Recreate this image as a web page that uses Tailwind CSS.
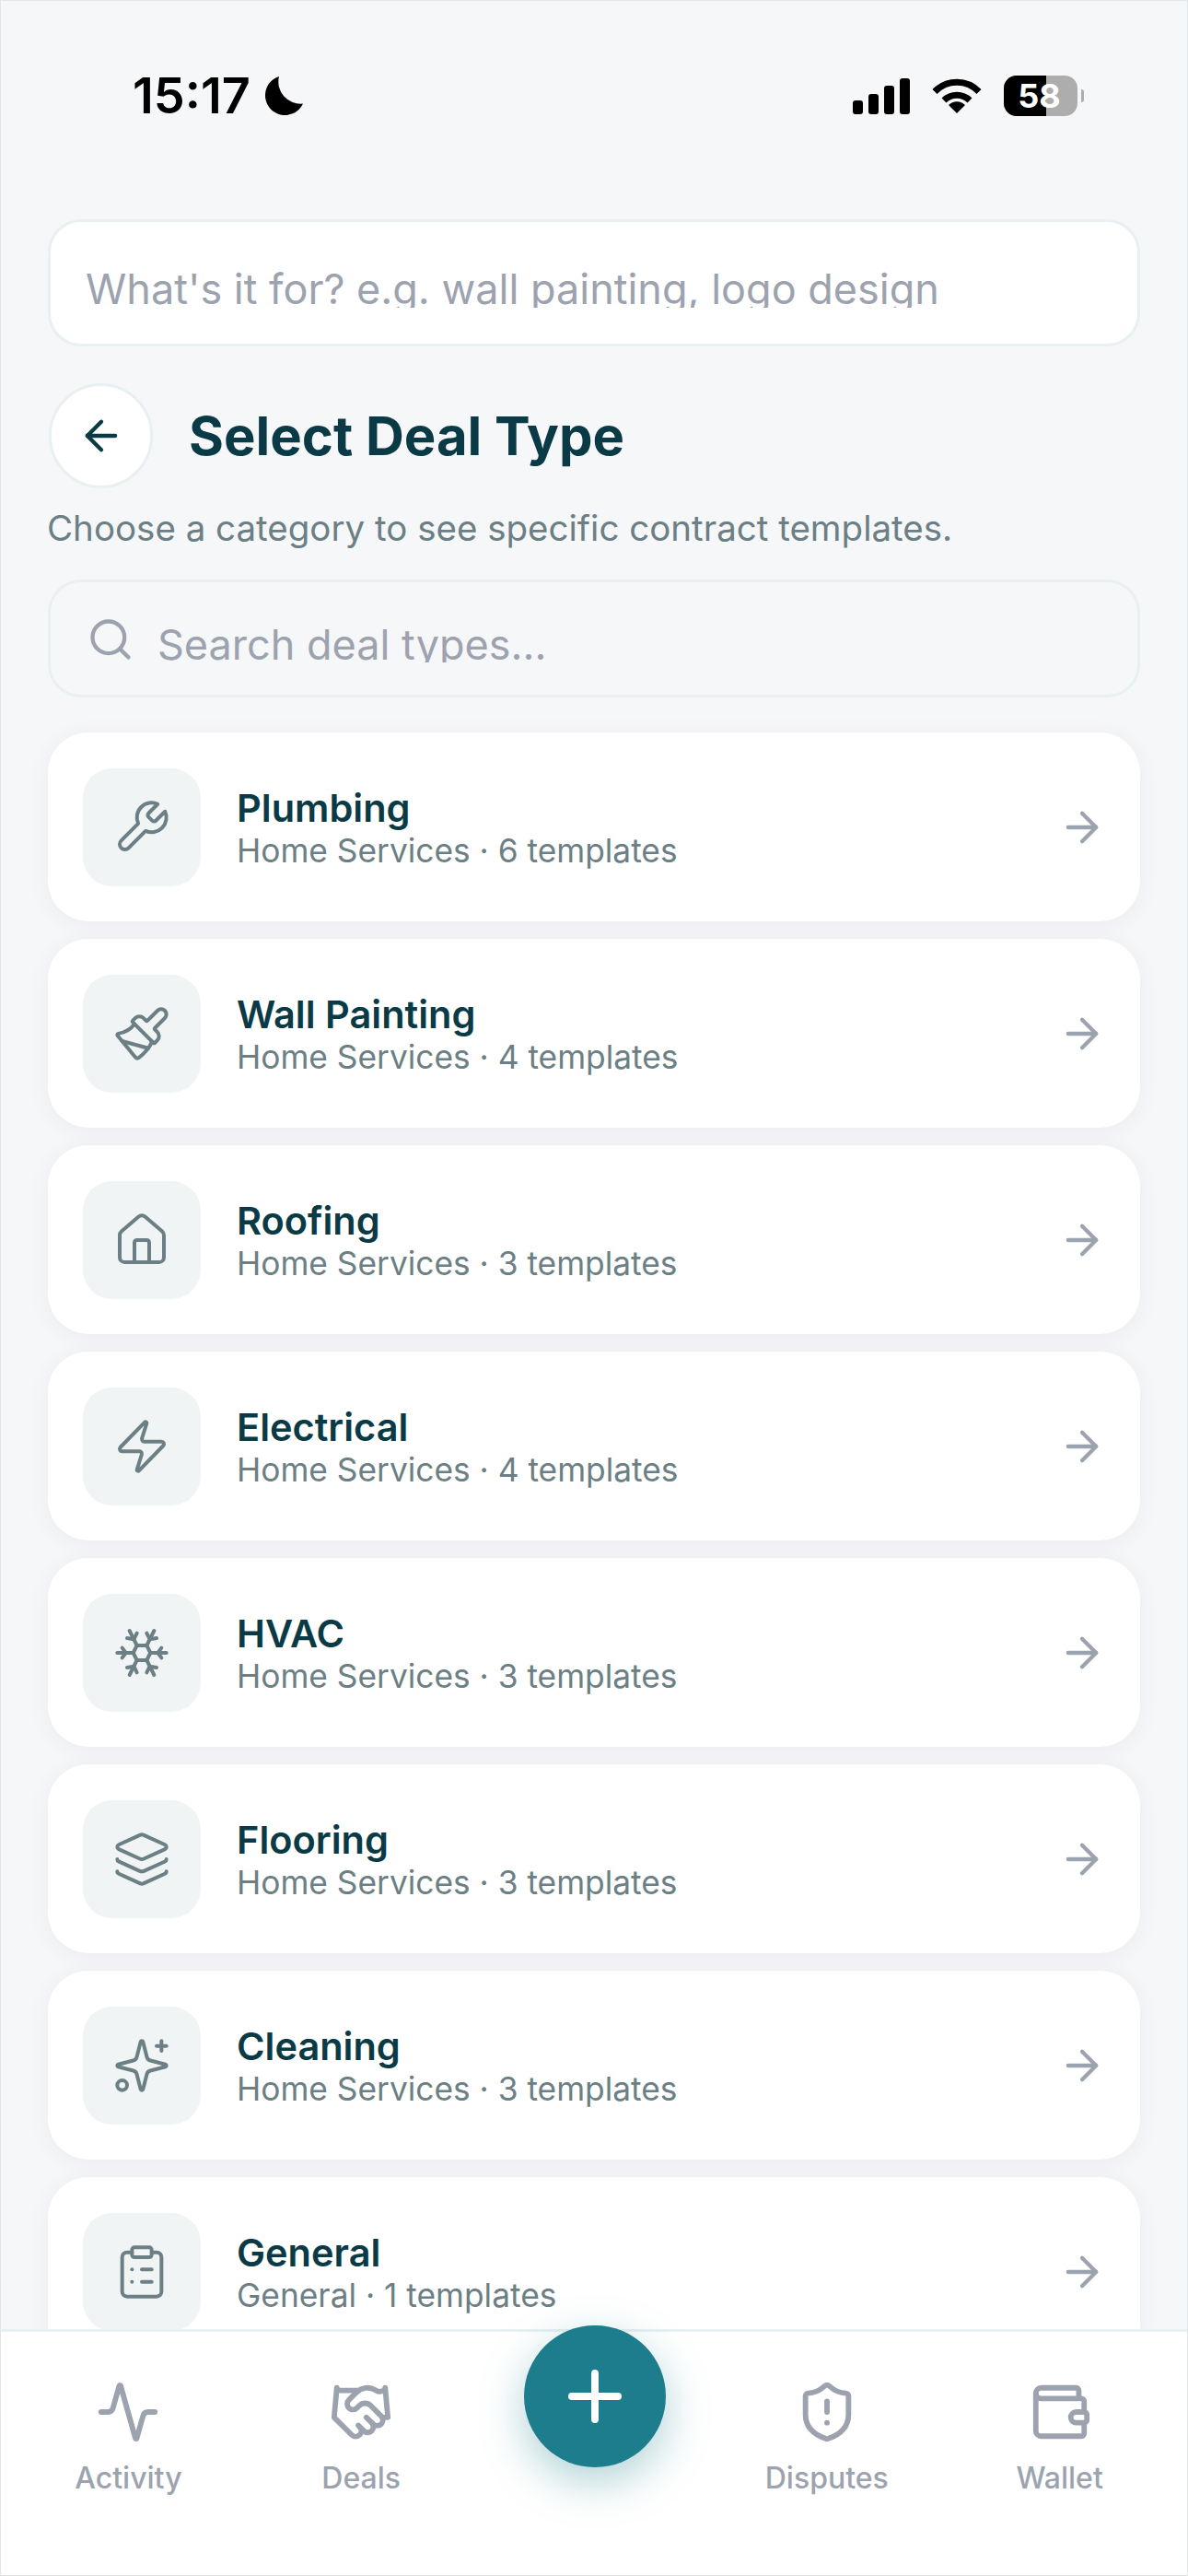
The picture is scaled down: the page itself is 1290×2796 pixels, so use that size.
<!DOCTYPE html>
<html lang="en">
<head>
    <meta charset="UTF-8">
    <meta name="viewport" content="width=device-width, initial-scale=1.0">
    <title>Select Deal Type</title>
    <script src="https://cdn.jsdelivr.net/npm/@tailwindcss/browser@4"></script>
</head>
<body class="bg-[#f6f7f9]">
<div class="w-[1290px] h-[2796px] flex flex-col overflow-hidden border border-[#e2e5ea] font-['Inter',sans-serif]">
    <!-- Status bar -->
    <div class="h-[237px] shrink-0 flex justify-between items-start pt-[81px] pl-[143px] pr-[112px] text-black">
        <div class="flex items-center gap-[14px] h-[44px]">
            <span class="text-[54px] leading-[44px] font-semibold">15:17</span>
            <svg class="w-[44px] h-[44px]" viewBox="0 0 44 44" fill="currentColor"><path d="M17 1A21.5 21.5 0 1 0 43 30.500A24 24 0 0 1 17 1Z"/></svg>
        </div>
        <div class="flex items-center h-[44px]">
            <div class="flex items-end gap-[6px] h-[39px]">
                <div class="w-[11px] h-[15px] rounded-[3px] bg-black"></div>
                <div class="w-[11px] h-[22px] rounded-[3px] bg-black"></div>
                <div class="w-[11px] h-[31px] rounded-[3px] bg-black"></div>
                <div class="w-[11px] h-[39px] rounded-[3px] bg-black"></div>
            </div>
            <svg class="w-[54px] h-[38px] ml-[24px]" viewBox="0 0 54 38" fill="none" stroke="currentColor"><path stroke-width="7" d="M3 14.500A33 33 0 0 1 51 14.500"/><path stroke-width="7" d="M13 24A20 20 0 0 1 41 24"/><path fill="currentColor" stroke="none" d="M27 38L18 29A12.500 12.500 0 0 1 36 29Z"/></svg>
            <div class="flex items-center ml-[24px]">
                <div class="relative w-[80px] h-[44px] rounded-[14px] bg-[#adadad] overflow-hidden">
                    <div class="w-[46px] h-full bg-black"></div>
                    <span class="absolute inset-0 pr-[3px] flex items-center justify-center text-white text-[36px] font-bold">58</span>
                </div>
                <div class="w-[3px] h-[14px] ml-[4px] rounded-r-full bg-[#adadad]"></div>
            </div>
        </div>
    </div>

    <main class="flex-1 min-h-0 overflow-hidden px-[51px] relative">
        <!-- What's it for -->
        <div class="h-[138px] rounded-[36px] border-[3px] border-[#e8f0f2] bg-white pl-[38px] overflow-hidden">
            <div class="h-[93px] overflow-hidden pt-[47px]">
                <div class="text-[45px] leading-[52px] text-[#9ca3af] whitespace-nowrap">What's it for? e.g. wall painting, logo design</div>
            </div>
        </div>

        <!-- Heading -->
        <div class="flex items-center gap-[39px] mt-[40px] ml-[1px]">
            <button class="w-[113px] h-[114px] rounded-full bg-white border-[3px] border-[#e8f0f2] flex items-center justify-center">
                <svg class="w-[52px] h-[52px] text-[#0a3a45]" viewBox="0 0 24 24" fill="none" stroke="currentColor" stroke-width="2" stroke-linecap="round" stroke-linejoin="round"><path d="m12 19-7-7 7-7"/><path d="M19 12H5"/></svg>
            </button>
            <h1 class="text-[58px] leading-[70px] font-bold text-[#0a3a45]">Select Deal Type</h1>
        </div>
        <p class="mt-[18px] text-[38.5px] leading-[50px] text-[#6b7f85] -ml-[1px]">Choose a category to see specific contract templates.</p>

        <!-- Search -->
        <div class="mt-[31px] h-[128px] rounded-[36px] border-[3px] border-[#e8f0f2] flex items-start pl-[39px] gap-[25px] overflow-hidden">
            <svg class="w-[52px] h-[52px] text-[#9ca3af] mt-[36px] shrink-0" viewBox="0 0 24 24" fill="none" stroke="currentColor" stroke-width="2" stroke-linecap="round" stroke-linejoin="round"><circle cx="11" cy="11" r="8"/><path d="m21 21-4.300-4.300"/></svg>
            <div class="h-[87px] overflow-hidden pt-[42px]">
                <div class="text-[45px] leading-[52px] text-[#9ca3af] whitespace-nowrap">Search deal types...</div>
            </div>
        </div>

        <!-- Deal types -->
        <div class="mt-[38px] flex flex-col gap-[19px]">
            <div class="h-[205px] shrink-0 rounded-[44px] bg-white shadow-[0_4px_24px_rgba(11,58,70,0.06)] flex items-center pl-[38px] pr-[37px]">
                <div class="w-[128px] h-[128px] rounded-[32px] bg-[#f0f4f5] flex items-center justify-center shrink-0">
                    <svg class="w-[64px] h-[64px] text-[#6b7f85]" viewBox="0 0 24 24" fill="none" stroke="currentColor" stroke-width="1.5" stroke-linecap="round" stroke-linejoin="round"><path d="M14.700 6.300a1 1 0 0 0 0 1.400l1.600 1.600a1 1 0 0 0 1.400 0l3.770-3.770a6 6 0 0 1-7.940 7.940l-6.910 6.910a2.120 2.120 0 0 1-3-3l6.910-6.910a6 6 0 0 1 7.940-7.940l-3.760 3.760z"/></svg>
                </div>
                <div class="flex-1 ml-[39px] pt-[1px]">
                    <div class="text-[41.5px] leading-[50px] font-semibold text-[#0a3a45]">Plumbing</div>
                    <div class="mt-[1px] text-[35.3px] leading-[42px] text-[#6b7f85]">Home Services · 6 templates</div>
                </div>
                <svg class="w-[52px] h-[52px] text-[#9ca3af]" viewBox="0 0 24 24" fill="none" stroke="currentColor" stroke-width="2" stroke-linecap="round" stroke-linejoin="round"><path d="M5 12h14"/><path d="m12 5 7 7-7 7"/></svg>
            </div>
            <div class="h-[205px] shrink-0 rounded-[44px] bg-white shadow-[0_4px_24px_rgba(11,58,70,0.06)] flex items-center pl-[38px] pr-[37px]">
                <div class="w-[128px] h-[128px] rounded-[32px] bg-[#f0f4f5] flex items-center justify-center shrink-0">
                    <svg class="w-[64px] h-[64px] text-[#6b7f85]" viewBox="0 0 24 24" fill="none" stroke="currentColor" stroke-width="1.5" stroke-linecap="round" stroke-linejoin="round"><path d="m14.622 17.897-10.680-2.913"/><path d="M18.376 2.622a1 1 0 1 1 3.002 3.002L17.360 9.643a.5.5 0 0 0 0 .707l.944.944a2.410 2.410 0 0 1 0 3.408l-.944.944a.5.5 0 0 1-.707 0L8.354 7.348a.5.5 0 0 1 0-.707l.944-.944a2.410 2.410 0 0 1 3.408 0l.944.944a.5.5 0 0 0 .707 0z"/><path d="M9 8c-1.804 2.710-3.970 3.460-6.583 3.948a.507.507 0 0 0-.302.819l7.320 8.883a1 1 0 0 0 1.185.204C12.735 20.405 16 16.792 16 15"/></svg>
                </div>
                <div class="flex-1 ml-[39px] pt-[1px]">
                    <div class="text-[41.5px] leading-[50px] font-semibold text-[#0a3a45]">Wall Painting</div>
                    <div class="mt-[1px] text-[35.3px] leading-[42px] text-[#6b7f85]">Home Services · 4 templates</div>
                </div>
                <svg class="w-[52px] h-[52px] text-[#9ca3af]" viewBox="0 0 24 24" fill="none" stroke="currentColor" stroke-width="2" stroke-linecap="round" stroke-linejoin="round"><path d="M5 12h14"/><path d="m12 5 7 7-7 7"/></svg>
            </div>
            <div class="h-[205px] shrink-0 rounded-[44px] bg-white shadow-[0_4px_24px_rgba(11,58,70,0.06)] flex items-center pl-[38px] pr-[37px]">
                <div class="w-[128px] h-[128px] rounded-[32px] bg-[#f0f4f5] flex items-center justify-center shrink-0">
                    <svg class="w-[64px] h-[64px] text-[#6b7f85]" viewBox="0 0 24 24" fill="none" stroke="currentColor" stroke-width="1.5" stroke-linecap="round" stroke-linejoin="round"><path d="M15 21v-8a1 1 0 0 0-1-1h-4a1 1 0 0 0-1 1v8"/><path d="M3 10a2 2 0 0 1 .709-1.528l7-5.999a2 2 0 0 1 2.582 0l7 5.999A2 2 0 0 1 21 10v9a2 2 0 0 1-2 2H5a2 2 0 0 1-2-2z"/></svg>
                </div>
                <div class="flex-1 ml-[39px] pt-[1px]">
                    <div class="text-[41.5px] leading-[50px] font-semibold text-[#0a3a45]">Roofing</div>
                    <div class="mt-[1px] text-[35.3px] leading-[42px] text-[#6b7f85]">Home Services · 3 templates</div>
                </div>
                <svg class="w-[52px] h-[52px] text-[#9ca3af]" viewBox="0 0 24 24" fill="none" stroke="currentColor" stroke-width="2" stroke-linecap="round" stroke-linejoin="round"><path d="M5 12h14"/><path d="m12 5 7 7-7 7"/></svg>
            </div>
            <div class="h-[205px] shrink-0 rounded-[44px] bg-white shadow-[0_4px_24px_rgba(11,58,70,0.06)] flex items-center pl-[38px] pr-[37px]">
                <div class="w-[128px] h-[128px] rounded-[32px] bg-[#f0f4f5] flex items-center justify-center shrink-0">
                    <svg class="w-[64px] h-[64px] text-[#6b7f85]" viewBox="0 0 24 24" fill="none" stroke="currentColor" stroke-width="1.5" stroke-linecap="round" stroke-linejoin="round"><path d="M4 14a1 1 0 0 1-.78-1.630l9.900-10.200a.5.5 0 0 1 .86.46l-1.920 6.020A1 1 0 0 0 13 10h7a1 1 0 0 1 .78 1.630l-9.900 10.200a.5.5 0 0 1-.86-.46l1.920-6.020A1 1 0 0 0 11 14z"/></svg>
                </div>
                <div class="flex-1 ml-[39px] pt-[1px]">
                    <div class="text-[41.5px] leading-[50px] font-semibold text-[#0a3a45]">Electrical</div>
                    <div class="mt-[1px] text-[35.3px] leading-[42px] text-[#6b7f85]">Home Services · 4 templates</div>
                </div>
                <svg class="w-[52px] h-[52px] text-[#9ca3af]" viewBox="0 0 24 24" fill="none" stroke="currentColor" stroke-width="2" stroke-linecap="round" stroke-linejoin="round"><path d="M5 12h14"/><path d="m12 5 7 7-7 7"/></svg>
            </div>
            <div class="h-[205px] shrink-0 rounded-[44px] bg-white shadow-[0_4px_24px_rgba(11,58,70,0.06)] flex items-center pl-[38px] pr-[37px]">
                <div class="w-[128px] h-[128px] rounded-[32px] bg-[#f0f4f5] flex items-center justify-center shrink-0">
                    <svg class="w-[64px] h-[64px] text-[#6b7f85]" viewBox="0 0 24 24" fill="none" stroke="currentColor" stroke-width="1.5" stroke-linecap="round" stroke-linejoin="round"><path d="m10 20-1.250-2.500L6 18"/><path d="M10 4 8.750 6.500 6 6"/><path d="m14 20 1.250-2.500L18 18"/><path d="m14 4 1.250 2.500L18 6"/><path d="m17 21-3-6h-4"/><path d="m17 3-3 6 1.500 3"/><path d="M2 12h6.500L10 9"/><path d="m20 10-1.500 2 1.500 2"/><path d="M22 12h-6.500L14 15"/><path d="m4 10 1.500 2L4 14"/><path d="m7 21 3-6-1.500-3"/><path d="m7 3 3 6h4"/></svg>
                </div>
                <div class="flex-1 ml-[39px] pt-[1px]">
                    <div class="text-[41.5px] leading-[50px] font-semibold text-[#0a3a45]">HVAC</div>
                    <div class="mt-[1px] text-[35.3px] leading-[42px] text-[#6b7f85]">Home Services · 3 templates</div>
                </div>
                <svg class="w-[52px] h-[52px] text-[#9ca3af]" viewBox="0 0 24 24" fill="none" stroke="currentColor" stroke-width="2" stroke-linecap="round" stroke-linejoin="round"><path d="M5 12h14"/><path d="m12 5 7 7-7 7"/></svg>
            </div>
            <div class="h-[205px] shrink-0 rounded-[44px] bg-white shadow-[0_4px_24px_rgba(11,58,70,0.06)] flex items-center pl-[38px] pr-[37px]">
                <div class="w-[128px] h-[128px] rounded-[32px] bg-[#f0f4f5] flex items-center justify-center shrink-0">
                    <svg class="w-[64px] h-[64px] text-[#6b7f85]" viewBox="0 0 24 24" fill="none" stroke="currentColor" stroke-width="1.5" stroke-linecap="round" stroke-linejoin="round"><path d="M12.830 2.180a2 2 0 0 0-1.660 0L2.600 6.080a1 1 0 0 0 0 1.830l8.580 3.910a2 2 0 0 0 1.660 0l8.580-3.900a1 1 0 0 0 0-1.830z"/><path d="M2 12a1 1 0 0 0 .58.91l8.600 3.910a2 2 0 0 0 1.650 0l8.580-3.900A1 1 0 0 0 22 12"/><path d="M2 17a1 1 0 0 0 .58.91l8.600 3.910a2 2 0 0 0 1.650 0l8.580-3.900A1 1 0 0 0 22 17"/></svg>
                </div>
                <div class="flex-1 ml-[39px] pt-[1px]">
                    <div class="text-[41.5px] leading-[50px] font-semibold text-[#0a3a45]">Flooring</div>
                    <div class="mt-[1px] text-[35.3px] leading-[42px] text-[#6b7f85]">Home Services · 3 templates</div>
                </div>
                <svg class="w-[52px] h-[52px] text-[#9ca3af]" viewBox="0 0 24 24" fill="none" stroke="currentColor" stroke-width="2" stroke-linecap="round" stroke-linejoin="round"><path d="M5 12h14"/><path d="m12 5 7 7-7 7"/></svg>
            </div>
            <div class="h-[205px] shrink-0 rounded-[44px] bg-white shadow-[0_4px_24px_rgba(11,58,70,0.06)] flex items-center pl-[38px] pr-[37px]">
                <div class="w-[128px] h-[128px] rounded-[32px] bg-[#f0f4f5] flex items-center justify-center shrink-0">
                    <svg class="w-[64px] h-[64px] text-[#6b7f85]" viewBox="0 0 24 24" fill="none" stroke="currentColor" stroke-width="1.5" stroke-linecap="round" stroke-linejoin="round"><path d="M9.937 15.500A2 2 0 0 0 8.500 14.063l-6.135-1.582a.5.5 0 0 1 0-.962L8.500 9.936A2 2 0 0 0 9.937 8.500l1.582-6.135a.5.5 0 0 1 .963 0L14.063 8.500A2 2 0 0 0 15.500 9.937l6.135 1.581a.5.5 0 0 1 0 .964L15.500 14.063a2 2 0 0 0-1.437 1.437l-1.582 6.135a.5.5 0 0 1-.963 0z"/><path d="M20 2v4"/><path d="M22 4h-4"/><circle cx="4" cy="20" r="2"/></svg>
                </div>
                <div class="flex-1 ml-[39px] pt-[1px]">
                    <div class="text-[41.5px] leading-[50px] font-semibold text-[#0a3a45]">Cleaning</div>
                    <div class="mt-[1px] text-[35.3px] leading-[42px] text-[#6b7f85]">Home Services · 3 templates</div>
                </div>
                <svg class="w-[52px] h-[52px] text-[#9ca3af]" viewBox="0 0 24 24" fill="none" stroke="currentColor" stroke-width="2" stroke-linecap="round" stroke-linejoin="round"><path d="M5 12h14"/><path d="m12 5 7 7-7 7"/></svg>
            </div>
            <div class="h-[205px] shrink-0 rounded-[44px] bg-white shadow-[0_4px_24px_rgba(11,58,70,0.06)] flex items-center pl-[38px] pr-[37px]">
                <div class="w-[128px] h-[128px] rounded-[32px] bg-[#f0f4f5] flex items-center justify-center shrink-0">
                    <svg class="w-[64px] h-[64px] text-[#6b7f85]" viewBox="0 0 24 24" fill="none" stroke="currentColor" stroke-width="1.5" stroke-linecap="round" stroke-linejoin="round"><rect width="8" height="4" x="8" y="2" rx="1" ry="1"/><path d="M16 4h2a2 2 0 0 1 2 2v14a2 2 0 0 1-2 2H6a2 2 0 0 1-2-2V6a2 2 0 0 1 2-2h2"/><path d="M12 11h4"/><path d="M12 16h4"/><path d="M8 11h.01"/><path d="M8 16h.01"/></svg>
                </div>
                <div class="flex-1 ml-[39px] pt-[1px]">
                    <div class="text-[41.5px] leading-[50px] font-semibold text-[#0a3a45]">General</div>
                    <div class="mt-[1px] text-[35.3px] leading-[42px] text-[#6b7f85]">General · 1 templates</div>
                </div>
                <svg class="w-[52px] h-[52px] text-[#9ca3af]" viewBox="0 0 24 24" fill="none" stroke="currentColor" stroke-width="2" stroke-linecap="round" stroke-linejoin="round"><path d="M5 12h14"/><path d="m12 5 7 7-7 7"/></svg>
            </div>
        </div>
    </main>

    <!-- Bottom nav -->
    <nav class="h-[267px] shrink-0 relative bg-white border-t-[3px] border-[#e8f0f2] grid grid-cols-5 px-[12px] pt-[52px] text-[#9ca3af] text-[32px] leading-[40px] font-medium text-center">
        <div class="flex flex-col items-center gap-[17px]">
            <svg class="w-[70px] h-[70px]" viewBox="0 0 24 24" fill="none" stroke="currentColor" stroke-width="2" stroke-linecap="round" stroke-linejoin="round"><path d="M22 12h-2.480a2 2 0 0 0-1.930 1.460l-2.350 8.360a.25.25 0 0 1-.48 0L9.240 2.180a.25.25 0 0 0-.48 0l-2.350 8.360A2 2 0 0 1 4.490 12H2"/></svg>
            <span>Activity</span>
        </div>
        <div class="flex flex-col items-center gap-[17px]">
            <svg class="w-[70px] h-[70px]" viewBox="0 0 24 24" fill="none" stroke="currentColor" stroke-width="2" stroke-linecap="round" stroke-linejoin="round"><path d="m11 17 2 2a1 1 0 1 0 3-3"/><path d="m14 14 2.500 2.500a1 1 0 1 0 3-3l-3.880-3.880a3 3 0 0 0-4.240 0l-.88.88a1 1 0 1 1-3-3l2.810-2.810a5.790 5.790 0 0 1 7.060-.87l.47.28a2 2 0 0 0 1.420.25L21 4"/><path d="m21 3 1 11h-2"/><path d="M3 3 2 14l6.500 6.500a1 1 0 1 0 3-3"/><path d="M3 4h8"/></svg>
            <span>Deals</span>
        </div>
        <div></div>
        <div class="flex flex-col items-center gap-[17px]">
            <svg class="w-[70px] h-[70px]" viewBox="0 0 24 24" fill="none" stroke="currentColor" stroke-width="2" stroke-linecap="round" stroke-linejoin="round"><path d="M20 13c0 5-3.500 7.500-7.660 8.950a1 1 0 0 1-.67-.01C7.500 20.500 4 18 4 13V6a1 1 0 0 1 1-1c2 0 4.500-1.200 6.240-2.720a1.170 1.170 0 0 1 1.520 0C14.510 3.810 17 5 19 5a1 1 0 0 1 1 1z"/><path d="M12 8v4"/><path d="M12 16h.01"/></svg>
            <span>Disputes</span>
        </div>
        <div class="flex flex-col items-center gap-[17px]">
            <svg class="w-[70px] h-[70px]" viewBox="0 0 24 24" fill="none" stroke="currentColor" stroke-width="2" stroke-linecap="round" stroke-linejoin="round"><path d="M19 7V4a1 1 0 0 0-1-1H5a2 2 0 0 0 0 4h15a1 1 0 0 1 1 1v4h-3a2 2 0 0 0 0 4h3a1 1 0 0 0 1-1v-2a1 1 0 0 0-1-1"/><path d="M3 5v14a2 2 0 0 0 2 2h15a1 1 0 0 0 1-1v-4"/></svg>
            <span>Wallet</span>
        </div>
        <!-- FAB sits over the top border -->
        <button class="absolute left-[568px] -top-[7px] w-[154px] h-[154px] rounded-full bg-[#1e7d8c] shadow-[0_16px_48px_rgba(30,125,140,0.35)] flex items-center justify-center text-white">
            <svg class="w-[86px] h-[86px]" viewBox="0 0 24 24" fill="none" stroke="currentColor" stroke-width="2.200" stroke-linecap="round" stroke-linejoin="round"><path d="M5 12h14"/><path d="M12 5v14"/></svg>
        </button>
    </nav>
</div>
</body>
</html>
